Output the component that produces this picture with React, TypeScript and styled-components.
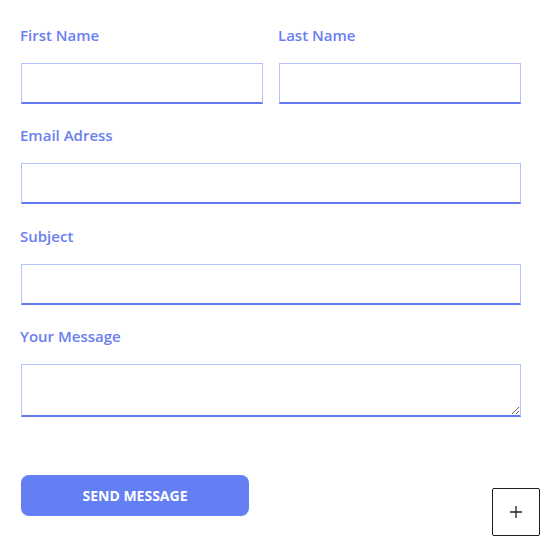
import React from "react";
import styled, { createGlobalStyle } from "styled-components";

const Global = createGlobalStyle`
  html, body { margin: 0; padding: 0; background: #ffffff; }
  body { font-family: "Open Sans", "Liberation Sans", sans-serif; }
  * { box-sizing: border-box; }
`;

const Form = styled.form`
  display: flex;
  flex-direction: column;
  padding: 25px 19px 0 21px;
  gap: 21.4px;
`;

const Row = styled.div`
  display: grid;
  grid-template-columns: 1fr 1fr;
  column-gap: 16px;
`;

const Field = styled.div`
  display: flex;
  flex-direction: column;
  gap: 18px;
`;

const Label = styled.label`
  margin-left: -1px;
  font-size: 15px;
  line-height: 20px;
  font-weight: 600;
  color: #6a7ef1;
`;

const Input = styled.input`
  display: block;
  height: 41px;
  width: 100%;
  border: 1px solid #b6c2fb;
  border-bottom: 2px solid #6479f1;
  background: #fff;
  outline: none;
  font-family: inherit;
  font-size: 15px;
  padding: 0 10px;
`;

const TextArea = styled.textarea`
  display: block;
  height: 53px;
  width: 100%;
  border: 1px solid #b6c2fb;
  border-bottom: 2px solid #6479f1;
  background: #fff;
  outline: none;
  font-family: inherit;
  font-size: 15px;
  padding: 6px 10px;
`;

const Actions = styled.div`
  padding-top: 36.5px;
`;

const SendButton = styled.button`
  width: 228px;
  height: 41px;
  border: none;
  border-radius: 8px;
  background: #647ef4;
  color: #ffffff;
  font-family: "Open Sans", "Liberation Sans", sans-serif;
  font-weight: 700;
  font-size: 14px;
  letter-spacing: 0;
  text-transform: uppercase;
  cursor: pointer;
`;

const PlusBox = styled.button`
  position: fixed;
  right: 0;
  bottom: 0;
  width: 48px;
  height: 48px;
  border: 1px solid #1f1f1f;
  border-radius: 2px;
  background: #fff;
  display: flex;
  align-items: center;
  justify-content: center;
  padding: 0;
  cursor: pointer;
`;

export default function App() {
  return (
    <>
      <Global />
      <Form onSubmit={(e) => e.preventDefault()}>
        <Row>
          <Field>
            <Label>First Name</Label>
            <Input type="text" />
          </Field>
          <Field>
            <Label>Last Name</Label>
            <Input type="text" />
          </Field>
        </Row>
        <Field>
          <Label>Email Adress</Label>
          <Input type="email" />
        </Field>
        <Field>
          <Label>Subject</Label>
          <Input type="text" />
        </Field>
        <Field>
          <Label>Your Message</Label>
          <TextArea />
        </Field>
        <Actions>
          <SendButton type="submit">Send Message</SendButton>
        </Actions>
      </Form>
      <PlusBox type="button" aria-label="add">
        <svg width="14" height="14" viewBox="0 0 14 14">
          <path d="M7 1v12M1 7h12" stroke="#222" strokeWidth="1.3" fill="none" />
        </svg>
      </PlusBox>
    </>
  );
}
